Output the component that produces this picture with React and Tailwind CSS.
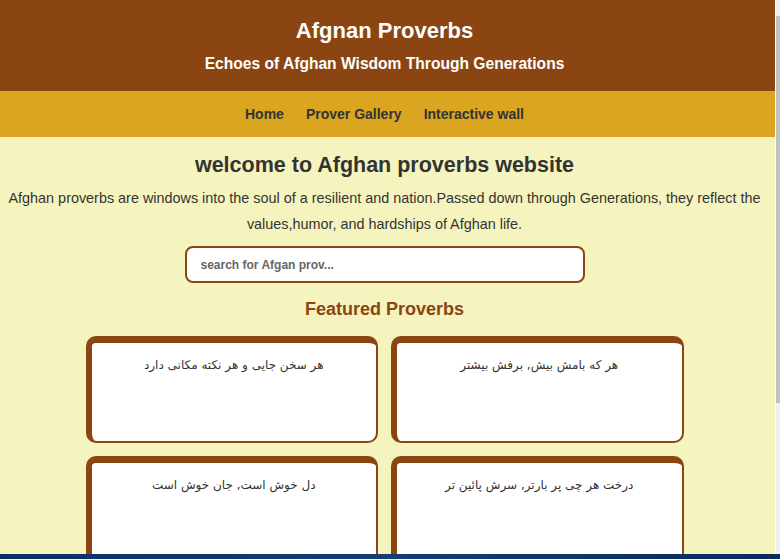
const proverbs = [
  'هر سخن جایی و هر نکته مکانی دارد',
  'هر که بامش بیش, برفش بیشتر',
  'دل خوش است, جان خوش است',
  'درخت هر چی پر بارتر, سرش پائین تر',
];

function ProverbCard({ text }) {
  return (
    <div className="h-[107px] rounded-[10px] border-2 border-l-[6px] border-t-[7px] border-[#8b4513] bg-white px-4 pt-[13px] text-center">
      <p dir="rtl" className="text-[12px] text-[#333]" style={{ fontFamily: '"DejaVu Sans", sans-serif' }}>
        {text}
      </p>
    </div>
  );
}

export default function App() {
  return (
    <div className="flex h-[559px] flex-col overflow-hidden bg-[#f6f4be]" style={{ fontFamily: '"Liberation Sans", Arial, sans-serif' }}>
      <div className="flex min-h-0 flex-1">
        <div className="min-w-0 flex-1 overflow-hidden">
          {/* header */}
          <header className="flex h-[91px] flex-col items-center bg-[#8b4513] pr-[6px] pt-[17px] text-white">
            <h1 className="text-[22px] font-bold leading-[28px]">Afgnan Proverbs</h1>
            <p className="mt-[9px] text-[15.6px] font-bold leading-[20px]">Echoes of Afghan Wisdom Through Generations</p>
          </header>

          {/* nav */}
          <nav className="flex h-[46px] items-center justify-center gap-[22px] bg-[#daa520] pr-[6px] text-[14px] font-bold text-[#333]">
            <a href="#">Home</a>
            <a href="#">Prover Gallery</a>
            <a href="#">Interactive wall</a>
          </nav>

          <main className="flex flex-col items-center pr-[6px] pt-[14px]">
            <h2 className="text-[21.5px] font-bold leading-[28px] text-[#333]">welcome to Afghan proverbs website</h2>
            <p className="mt-[6px] px-2 text-center text-[14.4px] leading-[26px] text-[#333]">
              Afghan proverbs are windows into the soul of a resilient and nation.Passed down through Generations, they reflect the values,humor, and hardships of Afghan life.
            </p>
            <input
              type="text"
              placeholder="search for Afgan prov..."
              className="mt-[9px] h-[37px] w-[400px] rounded-[8px] border-2 border-[#8b4513] bg-white px-[14px] text-[12px] font-bold placeholder:text-[#666] focus:outline-none"
            />
            <h3 className="mt-[14px] text-[18px] font-bold leading-[24px] text-[#8b4513]">Featured Proverbs</h3>
            <div className="mt-[15px] grid w-[598px] grid-cols-2 gap-x-[13px] gap-y-[13px]">
              {proverbs.map((p) => (
                <ProverbCard key={p} text={p} />
              ))}
            </div>
          </main>
        </div>

        {/* scrollbar */}
        <div className="flex w-[5px] flex-col border-l border-white bg-[#f0f0f0] pt-[16px]">
          <div className="h-[387px] bg-[#c1c1c1]" />
        </div>
      </div>

      {/* desktop strip */}
      <div className="h-[5px] bg-gradient-to-r from-[#0c2f63] via-[#123d75] to-[#0a2a5a]" />
    </div>
  );
}
